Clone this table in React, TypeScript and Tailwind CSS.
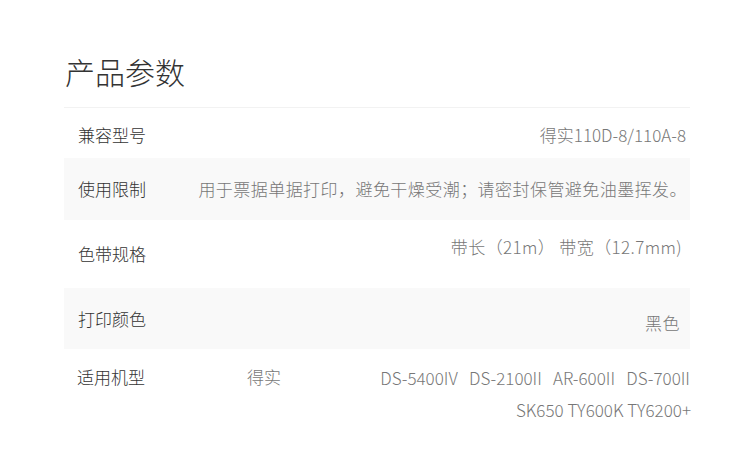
const font = { fontFamily: '"Noto Sans CJK SC", "Noto Sans", sans-serif' };

type Row = {
  label: string;
  value: string;
  gray: boolean;
  h: string;
  valueCls: string;
};

const rows: Row[] = [
  { label: "兼容型号", value: "得实110D-8/110A-8", gray: false, h: "h-[50px] pt-[3px]", valueCls: "pr-[4px]" },
  { label: "使用限制", value: "用于票据单据打印，避免干燥受潮；请密封保管避免油墨挥发。", gray: true, h: "h-[62px]", valueCls: "pr-[3px] tracking-[0.45px]" },
  { label: "色带规格", value: "带长（21m） 带宽（12.7mm)", gray: false, h: "h-[68px]", valueCls: "pr-[8px] mb-[14px] tracking-[0.4px]" },
  { label: "打印颜色", value: "黑色", gray: true, h: "h-[61px]", valueCls: "pr-[10px] mt-[8px] tracking-[0.5px]" },
];

export default function App() {
  return (
    <div className="w-[750px] h-[455px] bg-white pt-[50px] pl-[64px] overflow-hidden" style={font}>
      <h2 className="text-[30px] leading-[42px] pl-[1px] text-[#333] font-light">产品参数</h2>
      <div className="w-[626px] mt-[15px] border-t border-[#f2f2f2]">
        {rows.map((r) => (
          <div
            key={r.label}
            className={`flex items-center justify-between ${r.h} ${r.gray ? "bg-[#f9f9f9]" : "bg-white"}`}
          >
            <span className="pl-[14px] text-[17px] text-[#333] font-light shrink-0">{r.label}</span>
            <span className={`text-[17px] text-[#777] font-light ${r.valueCls}`}>{r.value}</span>
          </div>
        ))}
        <div className="flex items-start pt-[13px]">
          <span className="pl-[13px] text-[17px] leading-[30px] text-[#333] font-light w-[183px] shrink-0">适用机型</span>
          <span className="text-[17px] leading-[30px] text-[#777] font-light">得实</span>
          <div className="flex-1 text-right text-[17px] leading-[32px] text-[#777] font-light">
            <div className="whitespace-pre">DS-5400IV   DS-2100II   AR-600II   DS-700II</div>
            <div className="-mr-[1px]">SK650 TY600K TY6200+</div>
          </div>
        </div>
      </div>
    </div>
  );
}
